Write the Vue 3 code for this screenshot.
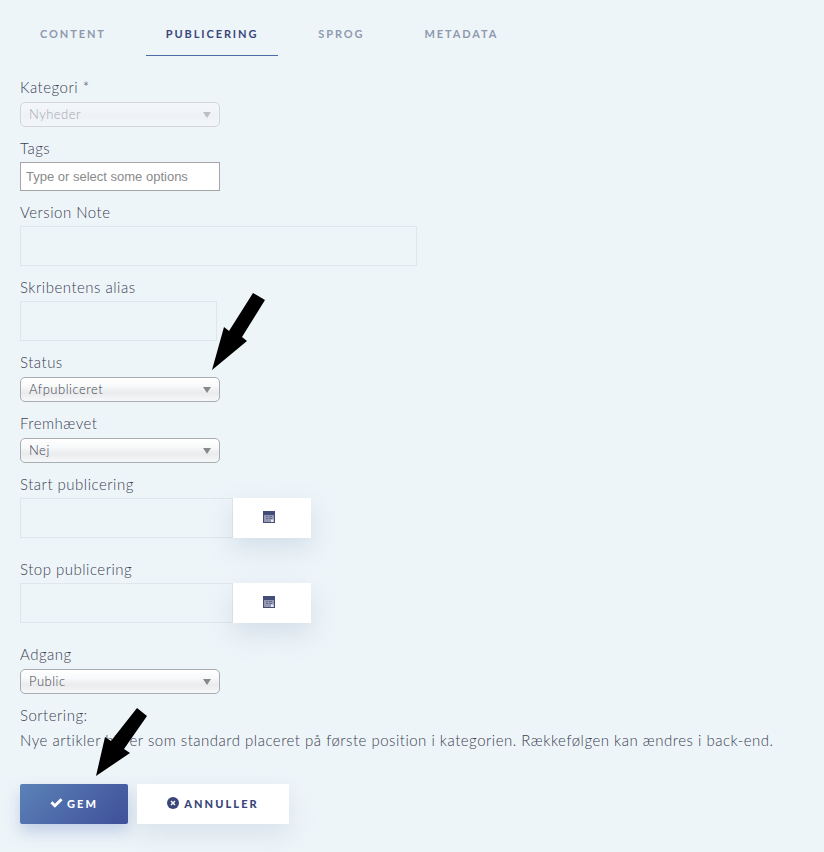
<script setup>
const tabs = [
  { name: 'CONTENT', active: false },
  { name: 'PUBLICERING', active: true },
  { name: 'SPROG', active: false },
  { name: 'METADATA', active: false }
]
</script>

<template>
  <div class="page">
    <ul class="tabs">
      <li v-for="tab in tabs" :key="tab.name" class="tab" :class="{ active: tab.active }">{{ tab.name }}</li>
    </ul>

    <form class="form" @submit.prevent>
      <div class="field">
        <label>Kategori *</label>
        <div class="select disabled"><span>Nyheder</span><i class="caret"></i></div>
      </div>
      <div class="field tight">
        <label>Tags</label>
        <div class="tags">Type or select some options</div>
      </div>
      <div class="field tight">
        <label>Version Note</label>
        <div class="input note"></div>
      </div>
      <div class="field tight">
        <label>Skribentens alias</label>
        <div class="input alias"></div>
      </div>
      <div class="field">
        <label>Status</label>
        <div class="select"><span>Afpubliceret</span><i class="caret"></i></div>
      </div>
      <div class="field">
        <label>Fremhævet</label>
        <div class="select"><span>Nej</span><i class="caret"></i></div>
      </div>
      <div class="field tight date">
        <label>Start publicering</label>
        <div class="date-row">
          <div class="input date-input"></div>
          <div class="cal-btn">
            <svg width="12" height="12" viewBox="0 0 12 12">
              <rect width="12" height="12" fill="#444d78" />
              <rect x="1" y="4" width="10" height="7" fill="#9498b0" />
              <path d="M3 5.5h2M6 5.5h3M3 7.5h2M6 7.5h3" stroke="#666c90" />
              <rect x="8" y="8.5" width="2.5" height="2.5" fill="#e8ebf5" />
            </svg>
          </div>
        </div>
      </div>
      <div class="field tight date">
        <label>Stop publicering</label>
        <div class="date-row">
          <div class="input date-input"></div>
          <div class="cal-btn">
            <svg width="12" height="12" viewBox="0 0 12 12">
              <rect width="12" height="12" fill="#444d78" />
              <rect x="1" y="4" width="10" height="7" fill="#9498b0" />
              <path d="M3 5.5h2M6 5.5h3M3 7.5h2M6 7.5h3" stroke="#666c90" />
              <rect x="8" y="8.5" width="2.5" height="2.5" fill="#e8ebf5" />
            </svg>
          </div>
        </div>
      </div>
      <div class="field">
        <label>Adgang</label>
        <div class="select"><span>Public</span><i class="caret"></i></div>
      </div>
      <div class="field">
        <label>Sortering:</label>
        <p class="hint">Nye artikler bliver som standard placeret på første position i kategorien. Rækkefølgen kan ændres i back-end.</p>
      </div>

      <div class="actions">
        <button class="btn save">
          <svg width="13" height="10" viewBox="0 0 14 11"><path d="M5.2 10.8.3 5.9l2.3-2.3 2.6 2.6L11.4.2l2.3 2.3z" fill="#fff" /></svg>
          GEM
        </button>
        <button class="btn cancel">
          <svg width="12" height="12" viewBox="0 0 12 12">
            <circle cx="6" cy="6" r="6" fill="#3a4679" />
            <path d="M4 4l4 4M8 4l-4 4" stroke="#fff" stroke-width="1.4" />
          </svg>
          ANNULLER
        </button>
      </div>
    </form>

    <svg class="arrows" width="824" height="852" viewBox="0 0 824 852">
      <polygon points="212,370 224,327 229,331 253,293 265,300 242,337 247,341" />
      <polygon points="96,776 105,737 111,741 137,708 147,716 124,749 130,753" />
    </svg>
  </div>
</template>

<style scoped>
.page {
  position: relative;
  width: 824px;
  height: 852px;
  overflow: hidden;
  background: #eef5f9;
  font-family: Lato, "Open Sans", sans-serif;
  color: #5b6272;
}

.tabs {
  display: flex;
  gap: 20px;
  list-style: none;
  margin: 0;
  padding: 13px 0 0 20px;
}

.tab {
  height: 43px;
  padding: 0 20px;
  box-sizing: border-box;
  line-height: 42px;
  font-size: 11px;
  font-weight: 700;
  letter-spacing: 1.9px;
  color: #8f99ad;
}

.tab.active {
  color: #3a4679;
  border-bottom: 1px solid #4d6ca6;
}

.form {
  display: flex;
  flex-direction: column;
  gap: 12px;
  padding: 22px 20px 0;
}

.field label {
  display: block;
  height: 20px;
  line-height: 18px;
  margin-bottom: 4px;
  font-size: 15px;
  font-weight: 300;
  letter-spacing: 0.5px;
  color: #3a4152;
}

.field.tight label {
  margin-bottom: 3px;
}

.field.date {
  margin-bottom: 10px;
}

.select {
  display: flex;
  align-items: center;
  justify-content: space-between;
  width: 200px;
  height: 25px;
  padding: 0 8px;
  box-sizing: border-box;
  border: 1px solid #a9acb0;
  border-radius: 5px;
  background: linear-gradient(#ffffff 0%, #f8f9fa 35%, #e9ebec 65%, #f6f8f9 100%);
  font-size: 13px;
  font-weight: 300;
  letter-spacing: 0.5px;
  color: #3f4450;
}

.select span {
  margin-bottom: 2px;
}

.select.disabled {
  border-color: #d2d6da;
  background: linear-gradient(#f4f7fa, #eef2f6 60%, #f3f6f9);
  color: #a4a8ae;
}

.caret {
  width: 0;
  height: 0;
  border-left: 4px solid transparent;
  border-right: 4px solid transparent;
  border-top: 6px solid #85888c;
}

.select.disabled .caret {
  border-top-color: #bcc0c4;
}

.tags {
  width: 200px;
  height: 29px;
  padding-left: 5px;
  box-sizing: border-box;
  border: 1px solid #a5a5a5;
  background: #fff;
  line-height: 27px;
  font-family: "Liberation Sans", Arial, sans-serif;
  font-size: 13px;
  color: #8a8a8a;
}

.input {
  height: 40px;
  box-sizing: border-box;
  border: 1px solid #dfe7ec;
  background: #eef5f9;
}

.note {
  width: 397px;
}

.alias {
  width: 197px;
}

.date-row {
  display: flex;
}

.date-input {
  width: 213px;
}

.cal-btn {
  display: flex;
  align-items: center;
  justify-content: center;
  width: 78px;
  height: 40px;
  padding: 0 7px 3px 0;
  box-sizing: border-box;
  background: #fff;
  box-shadow: 0 10px 25px rgba(150, 170, 195, 0.3);
}

.hint {
  margin: 0;
  height: 20px;
  line-height: 20px;
  font-size: 15px;
  font-weight: 300;
  letter-spacing: 0.5px;
  color: #3a4152;
  white-space: nowrap;
}

.actions {
  display: flex;
  gap: 9px;
  margin-top: 22px;
}

.btn {
  display: flex;
  align-items: center;
  justify-content: center;
  gap: 4px;
  height: 40px;
  padding: 0 0 2px;
  border: 0;
  font-family: inherit;
  font-size: 11px;
  font-weight: 900;
  letter-spacing: 2.1px;
}

.save {
  width: 108px;
  border-radius: 2px;
  background: linear-gradient(135deg, #5b82b8, #3f4f98);
  color: #fff;
  box-shadow: 0 8px 16px rgba(90, 120, 190, 0.3);
}

.cancel {
  width: 152px;
  gap: 5px;
  background: #fff;
  color: #3a4679;
  box-shadow: 0 10px 25px rgba(150, 170, 195, 0.25);
}

.arrows {
  position: absolute;
  top: 0;
  left: 0;
  pointer-events: none;
}
</style>

<style>
html,
body {
  margin: 0;
  background: #eef5f9;
}
</style>
